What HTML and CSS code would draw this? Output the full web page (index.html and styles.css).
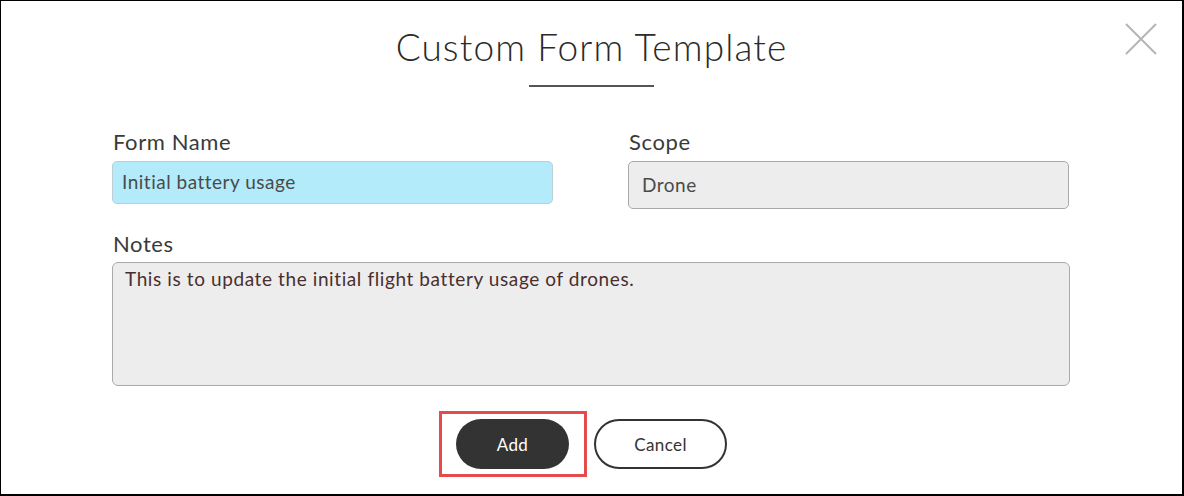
FILE: index.html
```html
<!DOCTYPE html>
<html>
<head>
<meta charset="utf-8">
<link rel="stylesheet" href="styles.css">
</head>
<body>
<div class="dialog">
  <button class="close" aria-label="Close">
    <svg width="32" height="32" viewBox="0 0 32 32"><path d="M1 1 L31 31 M31 1 L1 31" stroke="#b5b5b5" stroke-width="2" fill="none"/></svg>
  </button>
  <h1 class="title">Custom Form Template</h1>
  <div class="rule"></div>
  <div class="fields">
    <div class="field">
      <label class="label">Form Name</label>
      <div class="input input-name">Initial battery usage</div>
    </div>
    <div class="field">
      <label class="label">Scope</label>
      <div class="input input-scope">Drone</div>
    </div>
    <div class="field field-wide">
      <label class="label">Notes</label>
      <div class="textarea">This is to update the initial flight battery usage of drones.</div>
    </div>
  </div>
  <div class="actions">
    <span class="highlight"><button class="btn btn-add">Add</button></span>
    <button class="btn btn-cancel">Cancel</button>
  </div>
</div>
</body>
</html>
```

FILE: styles.css
```css
html, body {
  margin: 0;
  padding: 0;
  background: #fff;
}
.dialog {
  position: relative;
  box-sizing: border-box;
  width: 1184px;
  height: 496px;
  border-style: solid;
  border-color: #000;
  border-width: 1px 2px 2px 1px;
  font-family: "Lato", "Liberation Sans", sans-serif;
  color: #333;
  overflow: hidden;
}
.close {
  position: absolute;
  top: 22px;
  right: 25px;
  padding: 0;
  border: 0;
  background: none;
  width: 32px;
  height: 32px;
}
.close svg { display: block; }
.title {
  margin: 24px 0 0;
  text-align: center;
  font-size: 37px;
  font-weight: 300;
  line-height: 44px;
  color: #2a2a2a;
  letter-spacing: 1.1px;
}
.rule {
  width: 125px;
  height: 2px;
  background: #555;
  margin: 16px auto 0;
}
.fields {
  display: grid;
  grid-template-columns: 441px 441px;
  column-gap: 75px;
  margin: 42px 0 0 111px;
  width: 958px;
}
.field-wide {
  grid-column: 1 / 3;
  margin-top: 22px;
}
.label {
  display: block;
  font-size: 22px;
  line-height: 26px;
  color: #3a3a3a;
  margin-bottom: 6px;
  padding-left: 1px;
  letter-spacing: 0.6px;
}
.input {
  box-sizing: border-box;
  font-size: 19px;
  letter-spacing: 0.5px;
  color: #4a4a4a;
  border-radius: 5px;
}
.input-name {
  height: 43px;
  background: #b3ebfb;
  border: 1px solid #bccfd6;
  padding: 8px 9px;
}
.input-scope {
  height: 48px;
  background: #ededed;
  border: 1px solid #aaa;
  padding: 11px 13px;
}
.textarea {
  box-sizing: border-box;
  width: 958px;
  height: 124px;
  margin-top: -1px;
  background: #ededed;
  border: 1px solid #aaa;
  border-radius: 6px;
  padding: 4px 12px;
  font-size: 19px;
  letter-spacing: 0.6px;
  color: #4a2e2e;
}
.actions {
  display: flex;
  justify-content: center;
  gap: 25px;
  margin-top: 33px;
}
.highlight {
  position: relative;
  display: block;
}
.highlight::after {
  content: "";
  position: absolute;
  left: -17px;
  right: -18px;
  top: -8px;
  bottom: -8px;
  border: 3px solid #e54b4b;
}
.btn {
  display: block;
  height: 50px;
  border-radius: 25px;
  font-family: "Lato", "Liberation Sans", sans-serif;
  font-size: 17px;
  letter-spacing: 0.4px;
  padding: 0;
  cursor: pointer;
}
.btn-add {
  width: 113px;
  background: #333;
  color: #fff;
  border: 0;
}
.btn-cancel {
  width: 133px;
  background: #fff;
  color: #333;
  border: 2px solid #333;
}
```
